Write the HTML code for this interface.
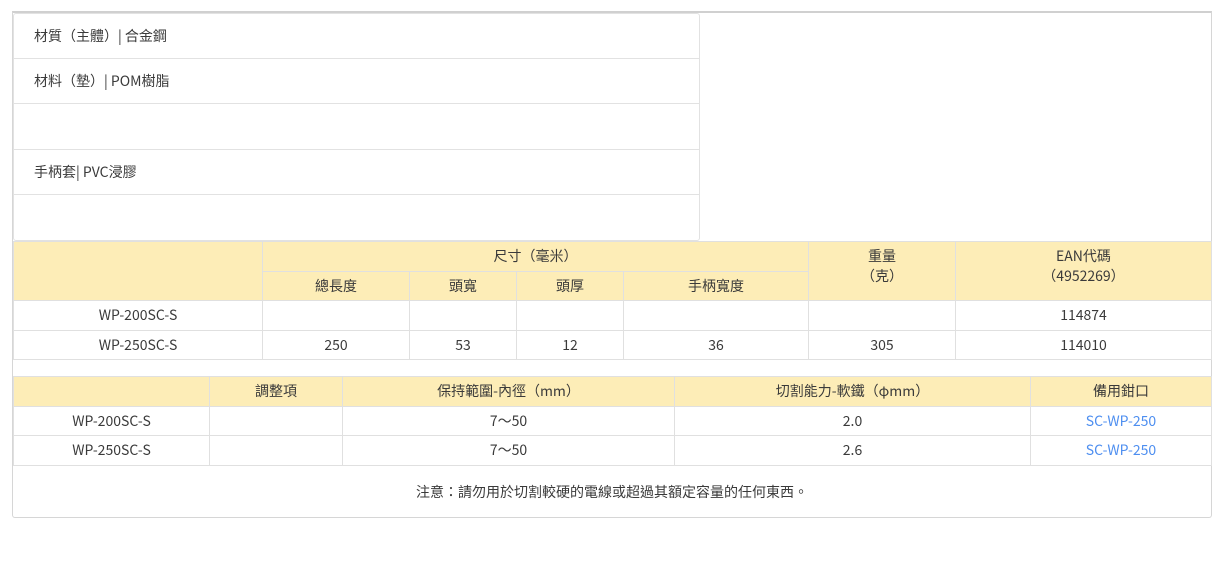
<!DOCTYPE html>
<html><head><meta charset="utf-8"><style>
*{margin:0;padding:0;box-sizing:border-box}
body{width:1223px;height:561px;background:#fff;font-family:"Liberation Sans Narrow","Noto Sans CJK TC",sans-serif;font-size:14px;color:#3a3a3a;position:relative;overflow:hidden}
.a{position:absolute}
.outer{left:12px;top:11px;width:1200px;height:507px;border:1px solid #d6d6d6;border-top:2px solid #d0d0d0;border-radius:0 0 3px 3px}
.spec{left:13px;top:13px;width:687px;height:228px;border:1px solid #e2e2e2;border-radius:3px}
.row{position:absolute;left:0;width:685px;border-bottom:1px solid #e2e2e2;padding-left:20px;line-height:45px}
table{position:absolute;border-collapse:collapse;table-layout:fixed}
td{border:1px solid #e0e0e0;text-align:center;height:29.5px;padding:0;line-height:20px}
.h td{background:#fdedb7}
.blue{color:#4d8ef0}
</style></head><body>
<div class="a outer"></div>
<div class="a spec">
<div class="row" style="top:0;height:45px">材質（主體）| 合金鋼</div>
<div class="row" style="top:45px;height:45px">材料（墊）| POM樹脂</div>
<div class="row" style="top:90px;height:46px"></div>
<div class="row" style="top:136px;height:45px">手柄套| PVC浸膠</div>
</div>
<table style="left:13px;top:241px;width:1198px">
<colgroup><col style="width:249px"><col style="width:147px"><col style="width:107px"><col style="width:107px"><col style="width:185px"><col style="width:147px"><col style="width:256px"></colgroup>
<tr class="h"><td rowspan="2"></td><td colspan="4">尺寸（毫米）</td><td rowspan="2" style="vertical-align:top;padding-top:4px">重量<br>（克）</td><td rowspan="2" style="vertical-align:top;padding-top:4px">EAN代碼<br>（4952269）</td></tr>
<tr class="h"><td>總長度</td><td>頭寬</td><td>頭厚</td><td>手柄寬度</td></tr>
<tr><td>WP-200SC-S</td><td></td><td></td><td></td><td></td><td></td><td>114874</td></tr>
<tr><td>WP-250SC-S</td><td>250</td><td>53</td><td>12</td><td>36</td><td>305</td><td>114010</td></tr>
</table>
<table style="left:13px;top:376px;width:1198px">
<colgroup><col style="width:196px"><col style="width:133px"><col style="width:332px"><col style="width:356px"><col style="width:181px"></colgroup>
<tr class="h"><td></td><td>調整項</td><td>保持範圍-內徑（mm）</td><td>切割能力-軟鐵（φmm）</td><td>備用鉗口</td></tr>
<tr><td>WP-200SC-S</td><td></td><td>7～50</td><td>2.0</td><td class="blue">SC-WP-250</td></tr>
<tr><td>WP-250SC-S</td><td></td><td>7～50</td><td>2.6</td><td class="blue">SC-WP-250</td></tr>
</table>
<div class="a" style="left:13px;top:482px;width:1198px;text-align:center">注意：請勿用於切割較硬的電線或超過其額定容量的任何東西。</div>
</body></html>
